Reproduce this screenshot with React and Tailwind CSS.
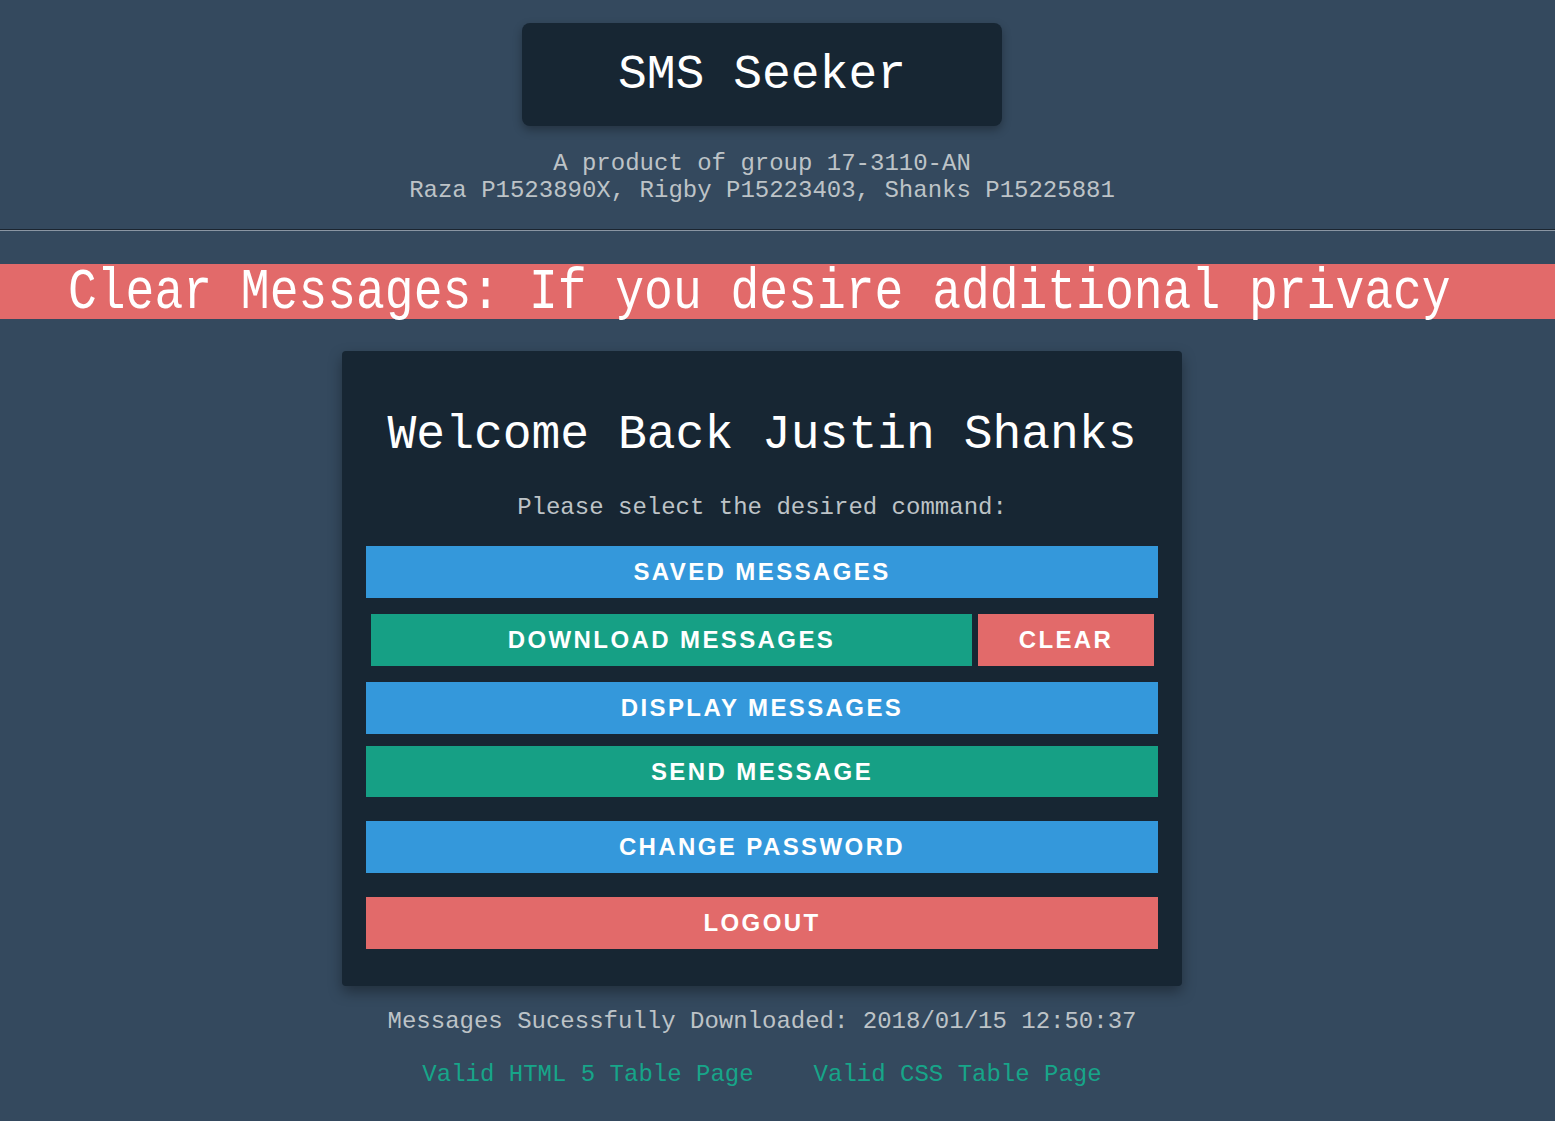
const mono = "font-['Liberation_Mono','DejaVu_Sans_Mono',monospace]";
const btn =
  "flex h-[52px] w-full items-center justify-center font-['Liberation_Sans',Arial,sans-serif] text-[24px] font-bold uppercase tracking-[0.1em] text-white";

function ActionButton({ color, className = "", children }) {
  return (
    <button type="button" className={`${btn} ${color} ${className}`}>
      {children}
    </button>
  );
}

export default function App() {
  return (
    <div className={`min-h-screen w-full overflow-x-hidden bg-[#34495e] pb-10 ${mono}`}>
      <header className="w-[1524px] pt-[23px]">
        <div className="mx-auto flex h-[103px] w-[480px] items-center justify-center rounded-lg bg-[#172633] shadow-[0_4px_10px_rgba(0,0,0,0.3)]">
          <h1 className="text-[48px] leading-none text-white">SMS Seeker</h1>
        </div>
        <div className="mt-[24px] text-center text-[24px] leading-[27px] text-[#bdc3c7]">
          <p>A product of group 17-3110-AN</p>
          <p>Raza P1523890X, Rigby P15223403, Shanks P15225881</p>
        </div>
      </header>

      <div className="mt-[25px] h-[2px] w-full border-t border-b border-t-[#1b2530] border-b-[#8a96a3]" />

      <div className="mt-[33px] flex h-[55px] w-full items-center whitespace-nowrap bg-[#e26a6a] pl-[68px]">
        <span className="inline-block scale-y-[1.2] text-[48px] leading-[48px] text-white">
          Clear Messages: If you desire additional privacy
        </span>
      </div>

      <main className="w-[1524px]">
        <section className="mx-auto mt-[32px] w-[840px] rounded bg-[#172633] px-6 pt-[56px] pb-[37px] shadow-[0_6px_14px_rgba(0,0,0,0.35)]">
          <h2 className="text-center text-[48px] leading-[56px] text-white">Welcome Back Justin Shanks</h2>
          <p className="mt-[31px] text-center text-[24px] leading-[27px] text-[#bdc3c7]">
            Please select the desired command:
          </p>

          <div className="mt-[25px] flex flex-col">
            <ActionButton color="bg-[#3498db]">Saved Messages</ActionButton>
            <div className="mt-4 flex gap-[6px] pl-[5px] pr-[4px]">
              <ActionButton color="bg-[#16a085]" className="!w-[601px] shrink-0">
                Download Messages
              </ActionButton>
              <ActionButton color="bg-[#e26a6a]" className="flex-1">
                Clear
              </ActionButton>
            </div>
            <ActionButton color="bg-[#3498db]" className="mt-4">
              Display Messages
            </ActionButton>
            <ActionButton color="bg-[#16a085]" className="mt-3 !h-[51px]">
              Send Message
            </ActionButton>
            <ActionButton color="bg-[#3498db]" className="mt-6">
              Change Password
            </ActionButton>
            <ActionButton color="bg-[#e26a6a]" className="mt-6">
              Logout
            </ActionButton>
          </div>
        </section>

        <p className="mt-[22px] text-center text-[24px] leading-[27px] text-[#bdc3c7]">
          Messages Sucessfully Downloaded: 2018/01/15 12:50:37
        </p>
        <div className="mt-[26px] flex justify-center gap-[60px] text-[24px] leading-[27px] text-[#17a589]">
          <a href="#">Valid HTML 5 Table Page</a>
          <a href="#">Valid CSS Table Page</a>
        </div>
      </main>
    </div>
  );
}
